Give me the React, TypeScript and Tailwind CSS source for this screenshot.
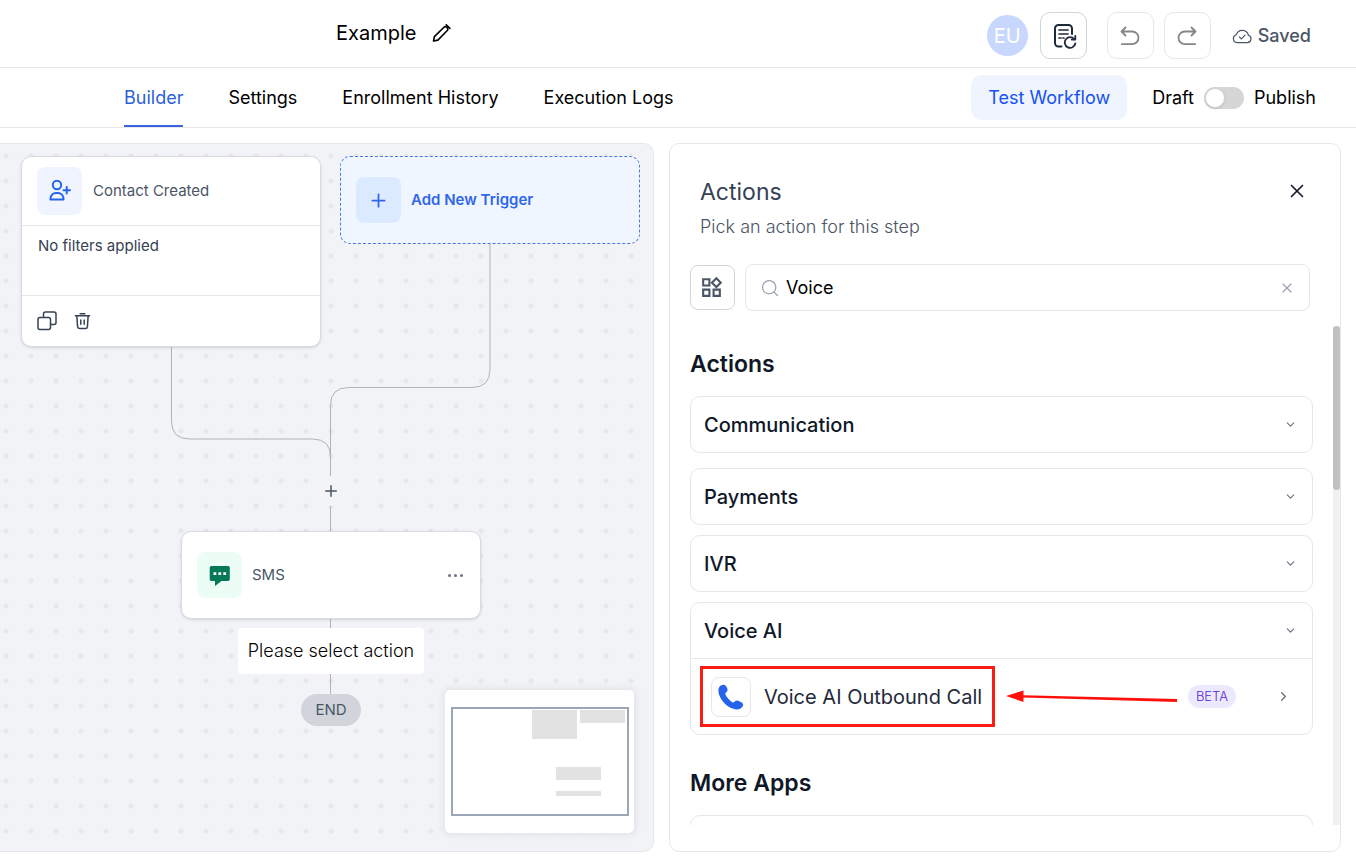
import React from 'react';
import { ChevronDown, ChevronRight, Plus, Search, X } from 'lucide-react';
import { MdOutlineWidgets } from 'react-icons/md';

const tabs = ['Builder', 'Settings', 'Enrollment History', 'Execution Logs'];

const stroke = {
  fill: 'none',
  stroke: 'currentColor',
  strokeLinecap: 'round' as const,
  strokeLinejoin: 'round' as const,
};

const PencilIcon = () => (
  <svg width="19" height="20" viewBox="0 0 20 20" {...stroke} strokeWidth="1.7" aria-hidden="true">
    <path d="M1.6 18.4l.9-4.6L12.6 3.9a1.9 1.9 0 0 1 2.7 0l.8.8a1.9 1.9 0 0 1 0 2.7L6.2 17.5z" />
    <path d="M15 1.4l3.8 3.8" />
  </svg>
);

const LogsIcon = () => (
  <svg width="24" height="26" viewBox="0 0 24 26" {...stroke} strokeWidth="2" aria-hidden="true">
    <path d="M8.5 23.5H5.5A3.5 3.5 0 0 1 2 20V5.5A3.5 3.5 0 0 1 5.5 2h10A3.5 3.5 0 0 1 19 5.5V11" />
    <path d="M6 7h9M6 11h9M6 15h2M10 15h1" strokeWidth="1.7" />
    <path d="M21.3 16.3a5.3 5.3 0 1 0 1 4.2" strokeWidth="1.8" />
    <path d="M22.3 13v3.6h-3.6" strokeWidth="1.8" />
  </svg>
);

const UndoIcon = () => (
  <svg width="20" height="20" viewBox="0 0 20 20" {...stroke} strokeWidth="1.8" aria-hidden="true">
    <path d="M5.5 1.5L1.5 5.5l4 4M1.8 5.5h10.4a6.3 6.3 0 0 1 0 12.600H1.8" />
  </svg>
);

const CloudIcon = () => (
  <svg width="20" height="16" viewBox="0 0 20 16" {...stroke} strokeWidth="1.2" aria-hidden="true">
    <path d="M5 14.7h10.4a3.8 3.8 0 0 0 1-7.4A6.3 6.3 0 0 0 4.3 6.7 4.1 4.1 0 0 0 5 14.7z" />
    <path d="M7.3 8.9l2 2 3.7-3.8" />
  </svg>
);

const UserPlusIcon = () => (
  <svg width="22" height="22" viewBox="0 0 22 22" {...stroke} strokeWidth="2" aria-hidden="true">
    <circle cx="8" cy="5" r="4.2" />
    <path d="M1.5 19.5v-1a5.5 5.5 0 0 1 5.5-5.5h2a5.5 5.5 0 0 1 5.5 5.5v1z" />
    <path d="M17.7 7v6.5M14.5 10.2H21" />
  </svg>
);

const CopyIcon = () => (
  <svg width="20" height="20" viewBox="0 0 20 20" {...stroke} strokeWidth="1.5" aria-hidden="true">
    <rect x="1" y="6.5" width="12.5" height="12" rx="2" />
    <path d="M6.5 6V3a2 2 0 0 1 2-2H17a2 2 0 0 1 2 2v8.5a2 2 0 0 1-2 2h-3" />
  </svg>
);

const TrashIcon = () => (
  <svg width="17" height="18" viewBox="0 0 18 18" {...stroke} strokeWidth="1.6" aria-hidden="true">
    <path d="M1.5 3.5h15M6.5 1.2h5M3 3.5l.8 11.5a2 2 0 0 0 2 1.9h6.4a2 2 0 0 0 2-1.9L15 3.5M7.2 8v4.5M10.8 8v4.5" />
  </svg>
);

const SmsIcon = () => (
  <svg width="22" height="21" viewBox="0 0 22 21" aria-hidden="true">
    <path d="M2.5 1h16.5a1.8 1.8 0 0 1 1.8 1.8v11.5a1.8 1.8 0 0 1-1.8 1.8h-6.5L6 21v-4.900H2.5a1.8 1.8 0 0 1-1.8-1.8V2.8A1.8 1.8 0 0 1 2.5 1z" fill="#047857" />
    <path d="M4.5 7.2h2.8v2.8H4.5zM9.400 7.2h2.8v2.8H9.400zM14.3 7.2h2.8v2.8h-2.8z" fill="#fff" />
  </svg>
);

const PhoneIcon = () => (
  <svg width="26" height="26" viewBox="0 0 26 26" fill="currentColor" aria-hidden="true">
    <path d="M3.2 1.3C4.9.2 7.2.6 8.3 2.5l.9 1.8c.8 1.6.3 3.2-1.2 4.3-.9.6-.9 1.5-.4 2.5 1.5 2.8 3.7 5.1 6.3 6.9 1 .6 1.9.5 2.6-.3 1.2-1.4 2.9-1.7 4.4-.8l2.8 1.7c1.5 1 1.9 2.5.9 3.9-1.2 2-3.3 3-5.6 3C9.5 25.2.5 14.8.4 6.6.4 4.3 1.2 2.5 3.2 1.3z" />
  </svg>
);

const Category = ({ title, children }: { title: string; children?: React.ReactNode }) => (
  <div className="rounded-[10px] border border-gray-200">
    <button className="flex h-[55px] w-full items-center justify-between pl-[13px] pr-[15px] text-xl font-medium text-gray-900">
      {title}
      <ChevronDown size={13} className="text-gray-500" />
    </button>
    {children}
  </div>
);

const iconButton = 'flex size-[47px] items-center justify-center rounded-[10px] border';

export default function App() {
  return (
    <div className="flex h-screen min-h-[865px] flex-col overflow-hidden bg-white font-['Inter',sans-serif] text-black">
      <header className="flex h-[68px] shrink-0 items-center justify-between border-b border-gray-200 pl-[336px] pr-[45px]">
        <div className="flex items-center gap-4 pb-[2px]">
          <h1 className="text-xl">Example</h1>
          <button aria-label="Rename workflow"><PencilIcon /></button>
        </div>
        <div className="flex items-center pt-1">
          <span className="mr-3 flex size-[41px] items-center justify-center rounded-full bg-[#c7d7fe] text-xl text-white">EU</span>
          <button aria-label="Workflow logs" className={`${iconButton} mr-5 border-gray-300 pl-[3px] text-gray-800`}><LogsIcon /></button>
          <button aria-label="Undo" className={`${iconButton} mr-[10px] border-gray-200 text-[#858585]`}><UndoIcon /></button>
          <button aria-label="Redo" className={`${iconButton} mr-[21px] border-gray-200 text-[#858585]`}>
            <span className="-scale-x-100"><UndoIcon /></span>
          </button>
          <span className="flex items-center gap-[6px] text-lg font-medium text-gray-600">
            <CloudIcon />
            Saved
          </span>
        </div>
      </header>

      <div className="flex h-[60px] shrink-0 items-center justify-between border-b border-gray-200 pl-[124px] pr-10 text-lg">
        <nav className="flex h-full gap-[45px]">
          {tabs.map((tab, i) => (
            <a
              key={tab}
              href="#"
              className={i === 0 ? 'flex items-center border-b-2 border-[#3b63e0] pt-[2px] text-[#2b5fd9]' : 'flex items-center'}
            >
              {tab}
            </a>
          ))}
        </nav>
        <div className="flex items-center">
          <button className="mr-[25px] h-[45px] rounded-[10px] bg-[#eff4ff] px-[17px] text-[#1550f5]">Test Workflow</button>
          <label className="flex items-center gap-[10px]">
            Draft
            <input type="checkbox" className="peer sr-only" />
            <span className="flex h-[22px] w-10 items-center rounded-full bg-[#d6d6d6] px-px">
              <span className="size-5 rounded-full border border-gray-300 bg-white shadow" />
            </span>
            Publish
          </label>
        </div>
      </div>

      <main className="grid min-h-0 flex-1 grid-cols-[minmax(0,654fr)_minmax(0,672fr)] gap-[15px] pb-[13px] pr-[15px] pt-[15px]">
        {/* Workflow canvas */}
        <section className="relative overflow-hidden rounded-r-[10px] border-y border-r border-gray-200 bg-[#f2f3f6] bg-[radial-gradient(circle_at_6px_12px,#e6e7e9_2px,transparent_3px)] bg-[size:25px_25px]">
          <svg className="absolute left-0 top-0" width="654" height="700" fill="none" stroke="#b1b1b7" strokeWidth="1" aria-hidden="true">
            <path d="M171.5 203V277q0 18 18 18H312.5q18 0 18 18v19" />
            <path d="M490 100V225.5q0 18 -18 18H348.5q-18 0 -18 18V332" />
            <path d="M330.5 362v26M330.5 475v10M330.5 529v22" />
          </svg>

          <div className="absolute left-[21px] top-3 flex h-[191px] w-[300px] flex-col rounded-[10px] border border-[#d8dbe2] bg-white text-[15px] shadow-sm">
            <div className="flex h-[69px] items-center gap-[11px] border-b border-gray-200 px-[15px] text-gray-600">
              <span className="flex h-12 w-[45px] items-center justify-center rounded-lg bg-[#eff4ff] text-[#2563eb]"><UserPlusIcon /></span>
              Contact Created
            </div>
            <p className="flex-1 px-4 pt-[9px] text-gray-700">No filters applied</p>
            <div className="flex h-[51px] items-center gap-[17px] border-t border-gray-200 px-[15px] text-gray-700">
              <button aria-label="Duplicate trigger"><CopyIcon /></button>
              <button aria-label="Delete trigger"><TrashIcon /></button>
            </div>
          </div>

          <button className="absolute left-[340px] top-3 flex h-[88px] w-[300px] items-center gap-[10px] rounded-[10px] border border-dashed border-[#4a78e0] bg-[#eff6ff] px-[15px] text-[15px] font-semibold text-[#2f66ea]">
            <span className="flex h-[46px] w-[45px] items-center justify-center rounded-lg bg-[#dbeafe]"><Plus size={21} strokeWidth={2} /></span>
            Add New Trigger
          </button>

          <button aria-label="Add step" className="absolute left-[316px] top-[332px] flex size-[30px] items-center justify-center rounded-full bg-[#f3f4f6] text-gray-600">
            <Plus size={18} strokeWidth={2} />
          </button>

          <div className="absolute left-[181px] top-[387px] flex h-[88px] w-[300px] items-center gap-[10px] rounded-[10px] border border-[#d8dbe2] bg-white px-[15px] text-[15px] text-gray-600 shadow-sm">
            <span className="flex h-[46px] w-[45px] items-center justify-center rounded-lg bg-[#ecfdf5]"><SmsIcon /></span>
            <span className="flex-1">SMS</span>
            <button aria-label="Step options" className="flex gap-[3px] pr-[2px]">
              <span className="size-[3px] rounded-full bg-gray-500" />
              <span className="size-[3px] rounded-full bg-gray-500" />
              <span className="size-[3px] rounded-full bg-gray-500" />
            </button>
          </div>

          <div className="absolute left-[238px] top-[484px] flex h-[46px] w-[186px] items-center justify-center rounded bg-white text-lg font-light">
            Please select action
          </div>
          <div className="absolute left-[301px] top-[550px] flex h-8 w-[60px] items-center justify-center rounded-full bg-[#d1d5db] text-[15px] text-gray-600">
            END
          </div>

          {/* Minimap */}
          <div className="absolute bottom-[18px] right-[19px] rounded-[5px] bg-white pl-[6px] pr-[5px] py-4 shadow-[0_0_6px_2px_#e2e3e8]">
            <svg width="178" height="111" aria-hidden="true">
              <rect x="1" y="2" width="176" height="107" fill="#fff" stroke="#9aa5b8" strokeWidth="2" />
              <g fill="#e2e2e2">
                <rect x="81" y="4" width="45" height="29" />
                <rect x="129" y="4" width="45" height="13" />
                <rect x="105" y="61" width="45" height="13" />
                <rect x="105" y="85" width="45" height="5" />
              </g>
            </svg>
          </div>
        </section>

        {/* Action picker */}
        <section className="flex min-h-0 flex-col rounded-[10px] border border-gray-200 pb-[26px]">
          <div className="flex items-start justify-between pl-[30px] pr-8 pt-8">
            <div>
              <h2 className="text-[23px] leading-8 text-gray-700">Actions</h2>
              <p className="mt-[5px] text-lg font-light text-gray-600">Pick an action for this step</p>
            </div>
            <button aria-label="Close" className="pt-1 text-gray-900"><X size={22} strokeWidth={1.8} /></button>
          </div>

          <div className="mt-[23px] flex items-center gap-[10px] pl-5 pr-[30px]">
            <button aria-label="Browse apps" className="flex size-[45px] items-center justify-center rounded-lg border border-gray-300 pr-[2px] text-gray-600">
              <MdOutlineWidgets size={25} />
            </button>
            <div className="flex h-[47px] flex-1 items-center gap-[6px] rounded-lg border border-gray-200 px-[14px]">
              <Search size={20} strokeWidth={1.5} className="text-gray-400" />
              <input aria-label="Search actions" defaultValue="Voice" className="min-w-0 flex-1 text-lg outline-none" />
              <button aria-label="Clear search" className="text-gray-400"><X size={16} strokeWidth={1.8} /></button>
            </div>
          </div>

          <div className="mt-[15px] flex min-h-0 flex-1">
            <div className="flex-1 overflow-hidden pl-5 pr-5 pt-[22px]">
              <h3 className="text-[23px] leading-8 font-semibold text-gray-900">Actions</h3>
              <div className="mt-4 flex flex-col gap-[10px]">
                <div className="mb-[5px]"><Category title="Communication" /></div>
                <Category title="Payments" />
                <Category title="IVR" />
                <Category title="Voice AI">
                  <div className="flex h-[76px] items-center border-t border-gray-200 pl-[9px] pr-[21px]">
                    <button className="flex h-[61px] w-[295px] items-center gap-[13px] border-[3px] border-[#fb1c14] pl-2 text-xl text-gray-800">
                      <span className="flex size-10 items-center justify-center rounded-lg border border-gray-200 text-[#2563eb]">
                        <PhoneIcon />
                      </span>
                      Voice AI Outbound Call
                    </button>
                    <svg className="ml-[11px] shrink-0" width="171" height="14" viewBox="0 0 171 14" aria-hidden="true">
                      <path d="M0 6L17.5 .5v4.7L171 9v3L17.5 7.5v4.5z" fill="#fe0f0a" />
                    </svg>
                    <span className="ml-auto flex h-[23px] items-center rounded-full bg-[#ebe9fe] px-2 text-[13px] font-light text-[#5925dc]">BETA</span>
                    <ChevronRight size={15} className="ml-10 text-gray-500" />
                  </div>
                </Category>
              </div>
              <h3 className="mt-8 text-[23px] leading-8 font-semibold text-gray-900">More Apps</h3>
              <div className="mt-4">
                <Category title="" />
              </div>
            </div>
            <div className="w-[7px] bg-[#f1f1f1]">
              <div className="h-[164px] rounded-full bg-[#c1c1c1]" />
            </div>
          </div>
        </section>
      </main>
    </div>
  );
}
